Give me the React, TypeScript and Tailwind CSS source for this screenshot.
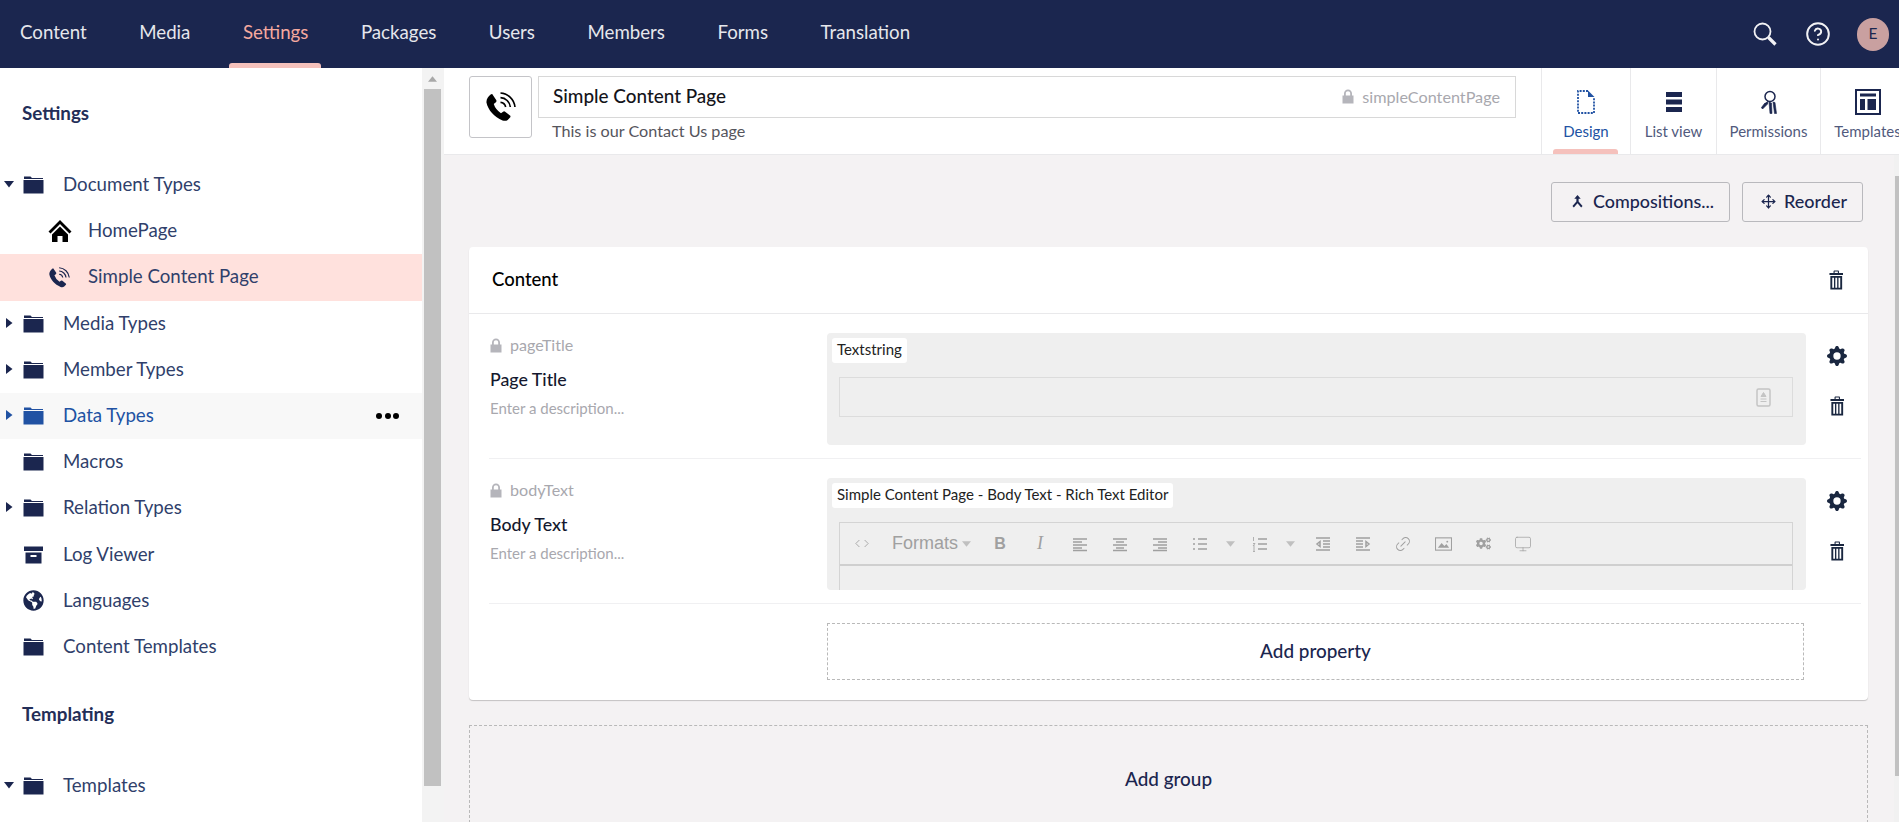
import { CircleHelp, Link2, Monitor, Move } from "lucide-react";
import { BsGearFill } from "react-icons/bs";
import { FaCogs, FaGlobeAmericas } from "react-icons/fa";

const navItems = ["Content", "Media", "Settings", "Packages", "Users", "Members", "Forms", "Translation"];

const FolderIcon = ({ className = "text-[#1b264f]" }: { className?: string }) => (
  <svg viewBox="0 0 21 18" className={`w-[21px] h-[18px] ${className}`} fill="currentColor">
    <path d="M1 0.5h6.5l1.5 1.5h11v1H1z" />
    <path d="M0.5 4h20v13.5H0.5z" />
  </svg>
);

const HomeIcon = () => (
  <svg viewBox="0 0 24 24" className="w-[24px] h-[24px] shrink-0 text-black" fill="currentColor">
    <path d="M12 1L0.5 12.5L2.5 14.5L12 5L21.5 14.5L23.5 12.5Z" />
    <path d="M12 7.5L4 15.5V23H9.5V17H14.5V23H20V15.5Z" />
  </svg>
);

const PhoneIcon = ({ className }: { className: string }) => (
  <svg viewBox="4 3 29 28" className={`shrink-0 ${className}`} fill="none" stroke="currentColor">
    <path
      d="M10 4.500L14 10.500Q14.500 12 13 13L11.500 14Q13 19 18.500 23L20.500 21.500Q21.500 20.800 22.500 21.500L27.500 25.500Q28 26.500 27 27.500L25 29.500Q23 31 20 30C12 27 6 20 4.500 13C4 10 6 7 8.500 5Q9.500 4 10 4.500Z"
      fill="currentColor"
      stroke="none"
    />
    <path d="M18 3.500A15 15 0 0 1 32 17M18 8A10 10 0 0 1 27.500 17M18 12.500A5.500 5.500 0 0 1 23 17" strokeWidth="1.600" />
  </svg>
);

const ArchiveIcon = () => (
  <svg viewBox="0 0 21 18" className="w-[21px] h-[18px] text-[#1b264f]" fill="currentColor">
    <path d="M1 0.5h19v4.5H1z" />
    <path fillRule="evenodd" d="M2.5 6.5h16v11h-16zM7.5 9v2h6V9z" />
  </svg>
);

const LockIcon = ({ className = "text-[#b5b5bb]" }: { className?: string }) => (
  <svg viewBox="0 0 12 15" className={`w-[12px] h-[15px] ${className}`} fill="currentColor">
    <path fillRule="evenodd" d="M6 0.5C3.6 0.5 2 2.2 2 4.5V6.5H0.5V14.5H11.5V6.5H10V4.5C10 2.2 8.4 0.5 6 0.5ZM3.8 6.5V4.5C3.8 3.1 4.7 2.2 6 2.2S8.2 3.1 8.2 4.5V6.5Z" />
  </svg>
);

const TrashIcon = () => (
  <svg viewBox="0 0 16 20" className="w-[14.500px] h-[20px] text-[#1a2740]" fill="currentColor" preserveAspectRatio="none">
    <path d="M5 1.500C5 .8 5.600.5 6 .5h4c.5 0 1 .3 1 1V3h4.500v2H.5V3H5zM6.200 1.600V3h3.600V1.600z" fillRule="evenodd" />
    <path fillRule="evenodd" d="M1.500 6h13v13.500h-13zM3.600 7.800v9.900h1.900V7.800zM7 7.800v9.900h2V7.800zM10.500 7.800v9.900h1.900V7.800z" />
  </svg>
);

const SearchIcon = () => (
  <svg viewBox="0 0 24 24" className="w-[24px] h-[24px] text-[#f2f2f5]" fill="none" stroke="currentColor">
    <circle cx="9.5" cy="9.5" r="8" strokeWidth="1.8" />
    <path d="M15.5 15.5L22.5 22.5" strokeWidth="3.2" />
  </svg>
);

const DesignIcon = () => (
  <svg viewBox="0 0 18 24" className="w-[18px] h-[24px] text-[#2152a3]" fill="none" stroke="currentColor">
    <path d="M11 1H1V23H17V7" strokeWidth="1.800" strokeDasharray="2 1.200" />
    <path d="M11 .5L17.500 7H11z" fill="currentColor" stroke="none" />
  </svg>
);

const ListIcon = () => (
  <svg viewBox="0 0 16 20" className="w-[16px] h-[20px] text-[#1b264f]" fill="currentColor">
    <path d="M0 0h16v5H0zM0 7.500h16v5H0zM0 15h16v5H0z" />
  </svg>
);

const KeysIcon = () => (
  <svg viewBox="0 0 18 24" className="w-[18px] h-[24px] text-[#1b264f]" fill="none" stroke="currentColor">
    <circle cx="10" cy="6.500" r="5" strokeWidth="1.500" />
    <path d="M8 11L7.500 14L2.500 19L1.500 17.500L5 13" fill="currentColor" strokeWidth="0.8" />
    <path d="M9 12L10 23.500H12L11.500 13Z" fill="currentColor" strokeWidth="0.6" />
    <path d="M13 12L14.500 23.500H16.500L15 12.500Z" fill="currentColor" strokeWidth="0.6" />
  </svg>
);

const TemplatesIcon = () => (
  <svg viewBox="0 0 26 26" className="w-[26px] h-[26px] text-[#1b264f]" fill="currentColor">
    <path fillRule="evenodd" d="M0 0h26v26H0zM2 2v22h22V2zM5 4.500h16v3H5zM5 10h5v11H5zM12.500 10H21v11h-8.500z" />
  </svg>
);

const MergeIcon = () => (
  <svg viewBox="0 0 12 14" className="w-[11px] h-[13px] text-[#1b264f]" fill="currentColor">
    <path d="M6 0L9.500 4H7.200V7L11.500 12L10 13.500L6 9L2 13.500L.5 12L4.800 7V4H2.500Z" />
  </svg>
);

const TextstringIcon = () => (
  <svg viewBox="0 0 15 19" className="w-[15px] h-[19px] text-[#c4c4c4]" fill="none" stroke="currentColor">
    <rect x="1" y="1" width="13" height="17" rx="1.500" strokeWidth="1.500" />
    <path d="M7.500 4.500L10 8.500H5zM4.500 11h6M4.500 13.500h6" fill="currentColor" strokeWidth="1" />
  </svg>
);

const Caret = ({ open, className = "text-[#1b264f]" }: { open?: boolean; className?: string }) => (
  <svg viewBox="0 0 10 10" className={`w-[10px] h-[10px] ${className}`} fill="currentColor">
    {open ? <path d="M0 2h10L5 8.500z" /> : <path d="M2 0l6.500 5L2 10z" />}
  </svg>
);

const TreeRow = ({ label, icon, caret, active, hover, child }: {
  label: string;
  icon: React.ReactNode;
  caret?: "open" | "closed";
  active?: boolean;
  hover?: boolean;
  child?: boolean;
}) => (
  <div
    className={`relative flex items-center h-[46.2px] ${child ? "pl-[49px]" : "pl-[23px]"} ${active ? "bg-[#ffe1dd]" : ""} ${hover ? "bg-[#f8f8f8]" : ""}`}
  >
    {caret && (
      <span className="absolute left-[4px] top-[17px]">
        <Caret open={caret === "open"} className={hover ? "text-[#2152a3]" : "text-[#1b264f]"} />
      </span>
    )}
    <span className="w-[21px] flex justify-center">{icon}</span>
    <span className={`${child ? "ml-[18px]" : "ml-[19px]"} pb-[2px] text-[18.7px] ${hover ? "text-[#2152a3]" : "text-[#303f6b]"}`}>{label}</span>
    {hover && (
      <span className="ml-auto mr-[23px] flex gap-[2.500px]">
        <i className="w-[6px] h-[6px] rounded-full bg-black" />
        <i className="w-[6px] h-[6px] rounded-full bg-black" />
        <i className="w-[6px] h-[6px] rounded-full bg-black" />
      </span>
    )}
  </div>
);

const Sidebar = () => (
  <aside className="w-[422px] shrink-0 bg-white overflow-hidden">
    <h3 className="pt-[33px] pb-[37px] pl-[22px] h-[94px] text-[18.8px] leading-[24px] font-bold text-[#232e58]">Settings</h3>
    <TreeRow label="Document Types" caret="open" icon={<FolderIcon />} />
    <TreeRow label="HomePage" child icon={<HomeIcon />} />
    <TreeRow label="Simple Content Page" child active icon={<PhoneIcon className="w-[21px] h-[21px] text-[#1b264f]" />} />
    <TreeRow label="Media Types" caret="closed" icon={<FolderIcon />} />
    <TreeRow label="Member Types" caret="closed" icon={<FolderIcon />} />
    <TreeRow label="Data Types" caret="closed" hover icon={<FolderIcon className="text-[#2152a3]" />} />
    <TreeRow label="Macros" icon={<FolderIcon />} />
    <TreeRow label="Relation Types" caret="closed" icon={<FolderIcon />} />
    <TreeRow label="Log Viewer" icon={<ArchiveIcon />} />
    <TreeRow label="Languages" icon={<FaGlobeAmericas className="w-[21px] h-[21px] text-[#1b264f]" />} />
    <TreeRow label="Content Templates" icon={<FolderIcon />} />
    <h3 className="pt-[32px] pb-[37px] pl-[22px] h-[93px] text-[18.8px] leading-[24px] font-bold text-[#232e58]">Templating</h3>
    <TreeRow label="Templates" caret="open" icon={<FolderIcon />} />
  </aside>
);

const Tab = ({ label, icon, width, active }: { label: string; icon: React.ReactNode; width: string; active?: boolean }) => (
  <div className={`relative shrink-0 h-full flex flex-col items-center border-l border-[#e9e9eb] ${width}`}>
    <div className="h-[30px] mt-[19px] flex items-center justify-center">{icon}</div>
    <span className={`mt-[4px] text-[15px] leading-[20px] whitespace-nowrap ${active ? "text-[#2152a3]" : "text-[#515a7d]"}`}>{label}</span>
    {active && <i className="absolute bottom-0 left-[11px] right-[12px] h-[5px] rounded-t-[3px] bg-[#f5c1bc]" />}
  </div>
);

const ToolBtn = ({ children, wide, className = "" }: { children: React.ReactNode; wide?: boolean; className?: string }) => (
  <span className={`h-full flex items-center justify-center shrink-0 text-[#a0a0a0] ${wide ? "w-[20px]" : "w-[40px]"} ${className}`}>{children}</span>
);

const Lines = ({ d }: { d: string }) => (
  <svg viewBox="0 0 16 16" className="w-[16px] h-[16px]" fill="none" stroke="currentColor" strokeWidth="1.500">
    <path d={d} />
  </svg>
);

const ToolArrow = () => (
  <svg viewBox="0 0 10 6" className="w-[9px] h-[6px] text-[#c0c0c0]" fill="currentColor">
    <path d="M0 0h10L5 6z" />
  </svg>
);

const Toolbar = () => (
  <div className="flex items-center h-[43px] pl-[2px] border-b-2 border-[#cfcfcf]">
    <ToolBtn>
      <svg viewBox="0 0 16 10" className="w-[14px] h-[9px]" fill="none" stroke="currentColor" strokeWidth="1">
        <path d="M5 1L1 5l4 4M11 1l4 4-4 4" />
      </svg>
    </ToolBtn>
    <span className="h-full w-[98px] pl-[10px] flex items-center gap-[4px] shrink-0 text-[18px] text-[#a0a0a0] font-['Liberation_Sans',sans-serif]">
      Formats
      <ToolArrow />
    </span>
    <ToolBtn><b className="text-[16px] font-['Liberation_Sans',sans-serif]">B</b></ToolBtn>
    <ToolBtn><i className="text-[18px] font-['Liberation_Serif',serif]">I</i></ToolBtn>
    <ToolBtn><Lines d="M1 3h14M1 6h9M1 9h14M1 12h9M1 14.500h14" /></ToolBtn>
    <ToolBtn><Lines d="M1 3h14M4 6h8M1 9h14M4 12h8M1 14.500h14" /></ToolBtn>
    <ToolBtn><Lines d="M1 3h14M6 6h9M1 9h14M6 12h9M1 14.500h14" /></ToolBtn>
    <ToolBtn><Lines d="M1 3h2M6 3h9M1 8h2M6 8h9M1 13h2M6 13h9" /></ToolBtn>
    <ToolBtn wide><ToolArrow /></ToolBtn>
    <ToolBtn>
      <svg viewBox="0 0 16 16" className="w-[16px] h-[16px]" fill="none" stroke="currentColor">
        <path d="M1.500 1v4M1 7.500h2L1 10h2M1 12h2M1 14h2M1 15.500h2" strokeWidth="0.8" />
        <path d="M6 3h9M6 8h9M6 13h9" strokeWidth="1.500" />
      </svg>
    </ToolBtn>
    <ToolBtn wide><ToolArrow /></ToolBtn>
    <ToolBtn className="ml-[3px]"><Lines d="M1 2h14M8 5h7M8 8h7M8 11h7M1 14h14M5 5.500L2 8l3 2.500z" /></ToolBtn>
    <ToolBtn><Lines d="M1 2h14M1 5h7M1 8h7M1 11h7M1 14h14M11 5.500L14 8l-3 2.500z" /></ToolBtn>
    <ToolBtn><Link2 size={18} strokeWidth={1.3} className="-rotate-45" /></ToolBtn>
    <ToolBtn>
      <svg viewBox="0 0 18 14" className="w-[17px] h-[14px]" fill="none" stroke="currentColor">
        <rect x="0.500" y="0.500" width="17" height="13" strokeWidth="1.200" />
        <path d="M3 11l4-5 3 3 2-2 3 4z" fill="currentColor" strokeWidth="0" />
        <circle cx="13" cy="4.500" r="1" fill="currentColor" strokeWidth="0" />
      </svg>
    </ToolBtn>
    <ToolBtn><FaCogs size={15} /></ToolBtn>
    <ToolBtn><Monitor size={18} strokeWidth={1} /></ToolBtn>
  </div>
);

const PropertyRow = ({ alias, label, tag, children }: { alias: string; label: string; tag: string; children: React.ReactNode }) => (
  <div className="flex ml-[20px] mr-[7px] h-[145px] pt-[19px] border-b border-[#f0f0f2]">
    <div className="w-[338px] shrink-0 pl-[1px]">
      <div className="flex items-center gap-[8px] h-[24px] text-[16.1px] text-[#a8a8ae]">
        <LockIcon />
        {alias}
      </div>
      <div className="mt-[10px] h-[24px] leading-[24px] text-[17.8px] font-medium text-[#14182e]">{label}</div>
      <div className="mt-[5px] h-[24px] leading-[24px] text-[15px] text-[#a8a8ae]">{description}</div>
    </div>
    <div className="w-[979px] h-[112px] shrink-0 bg-[#efefef] rounded-[4px] overflow-hidden">
      <div className="inline-block ml-[5px] mt-[5px] h-[25px] px-[5px] leading-[23px] align-top bg-white rounded-[3px] text-[15px] text-[#222]">{tag}</div>
      {children}
    </div>
    <div className="ml-[22px] w-[18px] flex flex-col items-center pt-[13px]">
      <BsGearFill className="w-[20px] h-[20px] shrink-0 text-[#1a2740]" />
      <span className="mt-[30px]"><TrashIcon /></span>
    </div>
  </div>
);

const description = "Enter a description...";

export default function App() {
  return (
    <div className="h-[822px] overflow-hidden flex flex-col bg-white font-['Lato',sans-serif]">
      <header className="h-[68px] shrink-0 bg-[#1b264f] flex items-center pl-[20px]">
        <nav className="flex gap-[52.500px]">
          {navItems.map((item) => (
            <a key={item} className={`relative h-[68px] leading-[64px] text-[18.7px] ${item === "Settings" ? "text-[#f5a99f]" : "text-[#e6e7ec]"}`}>
              {item}
              {item === "Settings" && <i className="absolute bottom-0 -left-[14px] -right-[13px] h-[5px] rounded-t-[3px] bg-[#f5c1bc]" />}
            </a>
          ))}
        </nav>
        <div className="ml-auto flex items-center mr-[10px]">
          <SearchIcon />
          <CircleHelp size={26} strokeWidth={1.8} className="ml-[28px] text-[#f2f2f5]" />
          <span className="ml-[26px] w-[32px] h-[33px] rounded-full bg-[#c9a0a0] flex items-center justify-center text-[15.5px] text-[#1b264f]">E</span>
        </div>
      </header>

      <div className="flex flex-1 min-h-0">
        <Sidebar />

        {/* tree scrollbar */}
        <div className="w-[22px] shrink-0 bg-[#f3f3f3] pl-[2px] pr-[3px] flex flex-col">
          <svg viewBox="0 0 10 6" className="w-[9px] h-[6px] mx-auto mt-[8px] text-[#a8a8a8]" fill="currentColor">
            <path d="M5 0l5 6H0z" />
          </svg>
          <div className="mt-[7px] h-[697px] bg-[#c1c1c1]" />
        </div>

        <main className="flex-1 min-w-0 flex flex-col overflow-hidden">
          <div className="h-[87px] shrink-0 bg-white border-b border-[#e9e9eb] flex pl-[25px]">
            <div className="w-[63px] h-[62px] mt-[8px] shrink-0 border border-[#c4c4c8] rounded-[3px] flex items-center justify-center">
              <PhoneIcon className="w-[30px] h-[30px] text-black" />
            </div>
            <div className="w-[978px] ml-[6px] mt-[8px] shrink-0">
              <div className="h-[42px] border border-[#d8d8d8] flex items-center pl-[14px] pr-[15px]">
                <span className="pb-[2px] text-[18.9px] font-medium text-[#14141a]">Simple Content Page</span>
                <span className="ml-auto flex items-center gap-[8px] text-[16.2px] text-[#a8a8ae]">
                  <LockIcon />
                  simpleContentPage
                </span>
              </div>
              <p className="mt-[2px] pl-[14px] text-[16.2px] leading-[22px] text-[#55555c]">This is our Contact Us page</p>
            </div>
            <div className="ml-[25px] h-full flex">
              <Tab label="Design" width="w-[89px]" active icon={<DesignIcon />} />
              <Tab label="List view" width="w-[86px]" icon={<ListIcon />} />
              <Tab label="Permissions" width="w-[104px]" icon={<KeysIcon />} />
              <Tab label="Templates" width="w-[94px]" icon={<TemplatesIcon />} />
            </div>
          </div>

          <div className="flex flex-1 min-h-0 bg-[#f4f2f3]">
            <div className="flex-1 min-w-0 pl-[25px] pr-[26px] overflow-hidden">
              <div className="flex justify-end gap-[12px] pt-[27px] pr-[5px] text-[#1b264f]">
                <button className="h-[40px] w-[179px] pb-[2px] border border-[#b9b9bd] rounded-[3px] flex items-center pl-[20px] gap-[10px] text-[17.9px] font-medium">
                  <MergeIcon />
                  Compositions...
                </button>
                <button className="h-[40px] w-[121px] pb-[2px] border border-[#b9b9bd] rounded-[3px] flex items-center pl-[18px] gap-[8px] text-[18px] font-medium">
                  <Move size={15} strokeWidth={2} />
                  Reorder
                </button>
              </div>

              <section className="mt-[25px] bg-white rounded-[4px] shadow-[0_1px_1px_rgba(0,0,0,0.2)]">
                <div className="h-[67px] border-b border-[#e9e9eb] flex items-center pl-[23px] pr-[25px]">
                  <span className="text-[18.5px] font-medium text-black">Content</span>
                  <span className="ml-auto"><TrashIcon /></span>
                </div>

                <PropertyRow alias="pageTitle" label="Page Title" tag="Textstring">
                  <div className="mt-[14px] ml-[12px] w-[954px] h-[40px] border border-[#dcdcdc] flex items-center justify-end pr-[21px]">
                    <TextstringIcon />
                  </div>
                </PropertyRow>

                <PropertyRow alias="bodyText" label="Body Text" tag="Simple Content Page - Body Text - Rich Text Editor">
                  <div className="mt-[14px] ml-[12px] w-[954px] h-[80px] border border-[#d4d4d4]">
                    <Toolbar />
                  </div>
                </PropertyRow>

                <div className="pt-[19px] pb-[20px] pl-[358px]">
                  <div className="w-[977px] h-[57px] border border-dashed border-[#b9b9b9] flex items-center justify-center text-[18.9px] font-medium text-[#1b264f]">
                    Add property
                  </div>
                </div>
              </section>

              <div className="mt-[25px] h-[108px] border border-dashed border-[#b9b9b9] flex items-center justify-center text-[18.9px] font-medium text-[#1b264f]">
                Add group
              </div>
            </div>

            {/* main scrollbar, cut off by the window edge */}
            <div className="w-[5px] shrink-0 bg-[#f1f1f1] pl-[1px]">
              <div className="mt-[21px] h-[600px] bg-[#c1c1c1]" />
            </div>
          </div>
        </main>
      </div>
    </div>
  );
}
